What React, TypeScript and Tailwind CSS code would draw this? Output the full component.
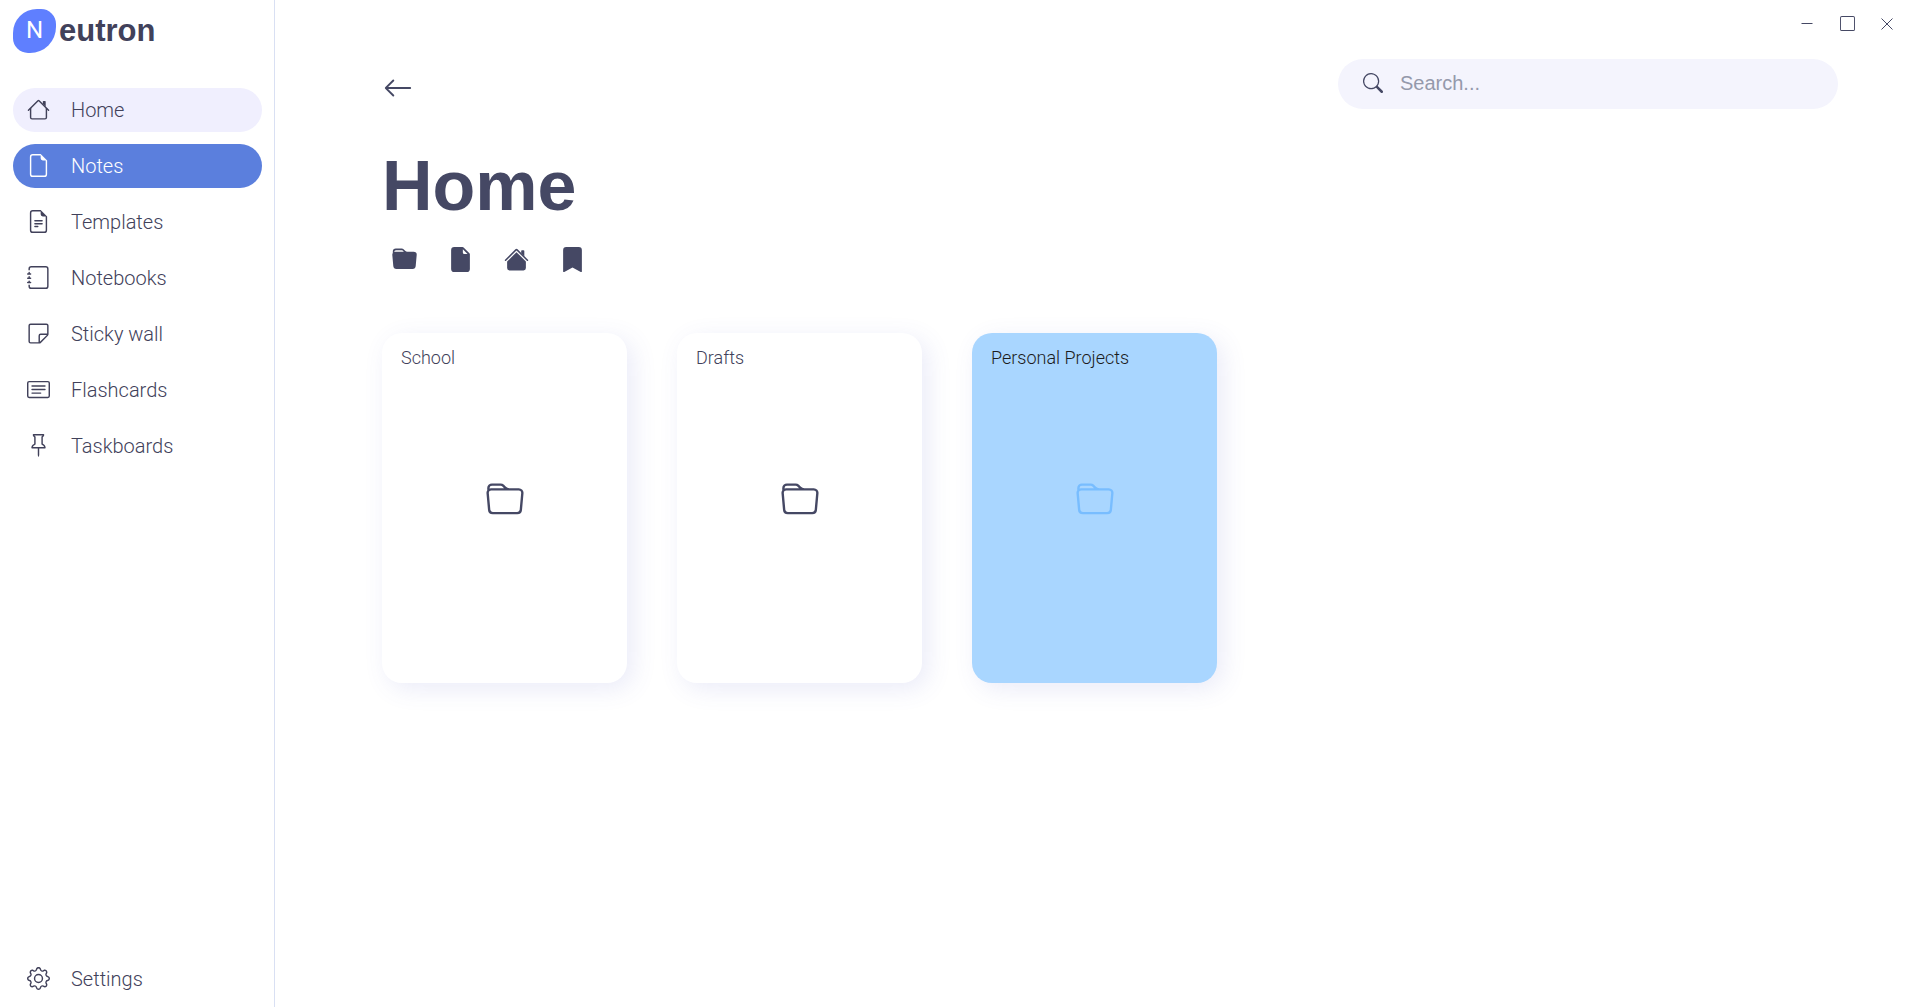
import type { ComponentType, ReactNode } from "react";
import {
  BsArrowLeft,
  BsBookmarkFill,
  BsCardText,
  BsFileEarmark,
  BsFileEarmarkFill,
  BsFileEarmarkText,
  BsFolder,
  BsFolderFill,
  BsGear,
  BsJournal,
  BsPin,
  BsSearch,
  BsSquare,
  BsSticky,
} from "react-icons/bs";

type IconProps = { className?: string };
type Icon = ComponentType<IconProps>;

const ROOF =
  "M7.293 1.5a1 1 0 0 1 1.414 0l6.647 6.646a.5.5 0 0 1-.708.708L8 2.207 1.354 8.854a.5.5 0 1 1-.708-.708L7.293 1.5z";

function House({ className }: IconProps) {
  return (
    <svg viewBox="0 0 16 16" fill="currentColor" className={className} aria-hidden="true">
      <path d="M2 13.5V7h1v6.5a.5.5 0 0 0 .5.5h9a.5.5 0 0 0 .5-.5V7h1v6.5a1.5 1.5 0 0 1-1.5 1.5h-9A1.5 1.5 0 0 1 2 13.5zm11-11V6l-2-2V2.5a.5.5 0 0 1 .5-.5h1a.5.5 0 0 1 .5.5z" />
      <path d={ROOF} />
    </svg>
  );
}

function HouseFill({ className }: IconProps) {
  return (
    <svg viewBox="0 0 16 16" fill="currentColor" className={className} aria-hidden="true">
      <path d="m8 3.293 6 6V13.5a1.5 1.5 0 0 1-1.5 1.5h-9A1.5 1.5 0 0 1 2 13.5V9.293l6-6zm5-.793V6l-2-2V2.5a.5.5 0 0 1 .5-.5h1a.5.5 0 0 1 .5.5z" />
      <path d={ROOF} />
    </svg>
  );
}

const NAV: { label: string; icon: Icon; tone: string }[] = [
  { label: "Home", icon: House, tone: "bg-[#f0effe] text-[#41415a]" },
  { label: "Notes", icon: BsFileEarmark, tone: "bg-[#5b7fdd] text-white" },
  { label: "Templates", icon: BsFileEarmarkText, tone: "text-[#41415a]" },
  { label: "Notebooks", icon: BsJournal, tone: "text-[#41415a]" },
  { label: "Sticky wall", icon: BsSticky, tone: "text-[#41415a]" },
  { label: "Flashcards", icon: BsCardText, tone: "text-[#41415a]" },
  { label: "Taskboards", icon: BsPin, tone: "text-[#41415a]" },
];

const ACTIONS: { label: string; icon: Icon }[] = [
  { label: "New folder", icon: BsFolderFill },
  { label: "New note", icon: BsFileEarmarkFill },
  { label: "Go home", icon: HouseFill },
  { label: "Bookmarks", icon: BsBookmarkFill },
];

const FOLDERS = [
  { name: "School", tone: "bg-white text-[#41415a]", iconTone: "text-[#454864]" },
  { name: "Drafts", tone: "bg-white text-[#41415a]", iconTone: "text-[#454864]" },
  { name: "Personal Projects", tone: "bg-[#a9d6ff] text-[#1c1c1c]", iconTone: "text-[#78bdff]" },
];

function NavItem({ label, icon: Glyph, tone }: { label: string; icon: Icon; tone: string }) {
  return (
    <a href="#" className={`flex h-11 items-center gap-5 rounded-full px-3.5 text-xl font-light ${tone}`}>
      <span className="w-6 shrink-0 pb-0.5">
        <Glyph className="block size-[23px]" />
      </span>
      {label}
    </a>
  );
}

function IconButton({ label, className, children }: { label: string; className: string; children: ReactNode }) {
  return (
    <button type="button" aria-label={label} className={`flex items-center justify-center ${className}`}>
      {children}
    </button>
  );
}

export default function App() {
  return (
    <div className="flex min-h-screen bg-white font-['Roboto',sans-serif] text-[#454864]">
      <aside className="flex w-[275px] shrink-0 flex-col border-r border-[#d9e0f3] pt-[9px] pr-3 pb-1.5 pl-[13px]">
        <div className="flex h-11 items-center gap-[3px]">
          <span className="flex h-11 w-[43px] items-center justify-center rounded-[24px_15px_26px_15px] bg-[#5f7fff] pb-0.5 text-2xl text-white">
            N
          </span>
          <span className="font-['Liberation_Sans',sans-serif] text-[31px] font-bold text-[#41415a]">eutron</span>
        </div>
        <nav className="mt-[35px] flex grow flex-col gap-3">
          {NAV.map((item) => (
            <NavItem key={item.label} {...item} />
          ))}
        </nav>
        <NavItem label="Settings" icon={BsGear} tone="text-[#41415a]" />
      </aside>

      <div className="flex min-w-0 grow flex-col">
        <div className="flex h-[47px] items-center justify-end gap-2 pr-[17px]">
          <IconButton label="Minimize" className="size-8">
            <svg viewBox="0 0 12 12" className="size-3" stroke="currentColor" aria-hidden="true">
              <path d="M.5 5.5h11" />
            </svg>
          </IconButton>
          <IconButton label="Maximize" className="size-8">
            <BsSquare className="size-[15px]" />
          </IconButton>
          <IconButton label="Close" className="size-8">
            <svg viewBox="0 0 12 12" className="size-3" stroke="currentColor" aria-hidden="true">
              <path d="M.5.5l11 11M11.5.5l-11 11" />
            </svg>
          </IconButton>
        </div>

        <main className="flex grow flex-col pr-[82px] pl-[107px]">
          <header className="mt-3 flex items-center justify-between">
            <IconButton label="Back" className="mt-2 size-8">
              <BsArrowLeft className="size-[30px]" />
            </IconButton>
            <label className="flex h-[50px] w-[500px] items-center gap-[17px] rounded-full bg-[#f4f4fd] pr-6 pb-0.5 pl-[25px]">
              <BsSearch className="size-5 shrink-0" />
              <input
                type="search"
                aria-label="Search"
                placeholder="Search..."
                className="min-w-0 grow bg-transparent font-['Liberation_Sans',sans-serif] text-xl outline-none placeholder:text-[#9499ab]"
              />
            </label>
          </header>

          <h1 className="mt-[37px] font-['Liberation_Sans',sans-serif] text-[70px] leading-[80px] font-bold">Home</h1>

          <div className="mt-[17px] flex gap-6 pl-1.5">
            {ACTIONS.map(({ label, icon: Glyph }) => (
              <IconButton key={label} label={label} className="size-8">
                <Glyph className="size-[25px]" />
              </IconButton>
            ))}
          </div>

          <section className="mt-[58px] flex flex-wrap gap-[50px]">
            {FOLDERS.map(({ name, tone, iconTone }) => (
              <a
                key={name}
                href="#"
                className={`flex h-[350px] w-[245px] flex-col rounded-[20px] px-[19px] pt-[11px] shadow-[6px_6px_25px_rgba(80,90,200,0.12)] ${tone}`}
              >
                <span className="text-lg leading-7 font-light">{name}</span>
                <span className="flex grow items-center justify-center pb-14">
                  <BsFolder className={`size-[38px] ${iconTone}`} />
                </span>
              </a>
            ))}
          </section>
        </main>
      </div>
    </div>
  );
}
